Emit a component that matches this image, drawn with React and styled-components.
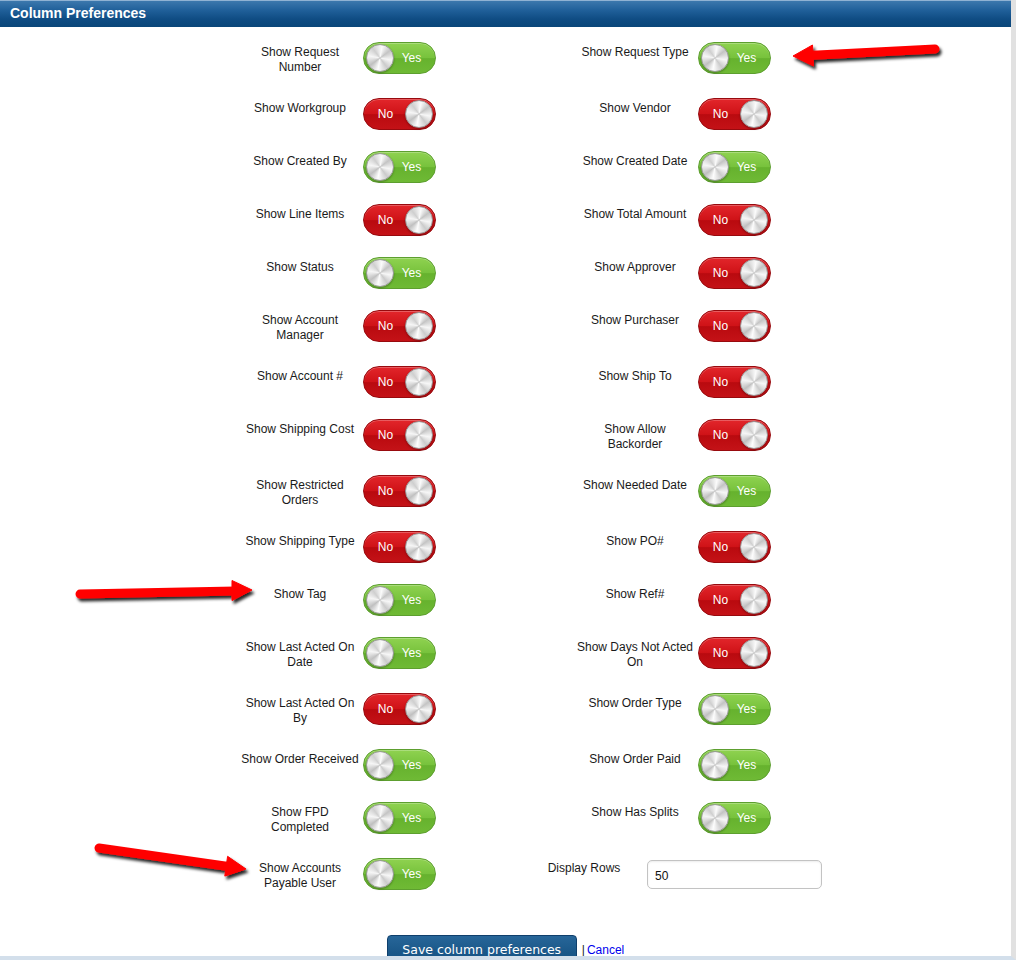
import React, { useState } from 'react';
import styled, { createGlobalStyle } from 'styled-components';

// labels that break where the original page breaks them
const rows = [
  [['Show Request Number', true], ['Show Request Type', true]],
  [['Show Workgroup', false], ['Show Vendor', false]],
  [['Show Created By', true], ['Show Created Date', true]],
  [['Show Line Items', false], ['Show Total Amount', false]],
  [['Show Status', true], ['Show Approver', false]],
  [['Show Account Manager', false], ['Show Purchaser', false]],
  [['Show Account #', false], ['Show Ship To', false]],
  [['Show Shipping Cost', false], ['Show Allow\nBackorder', false]],
  [['Show Restricted Orders', false], ['Show Needed Date', true]],
  [['Show Shipping Type', false], ['Show PO#', false]],
  [['Show Tag', true], ['Show Ref#', false]],
  [['Show Last Acted On Date', true], ['Show Days Not Acted On', false]],
  [['Show Last Acted On By', false], ['Show Order Type', true]],
  [['Show Order Received', true], ['Show Order Paid', true]],
  [['Show FPD\nCompleted', true], ['Show Has Splits', true]],
];

const Toggle = ({ initial }) => {
  const [on, setOn] = useState(initial);
  return (
    <Switch $on={on} onClick={() => setOn(!on)}>
      <Knob />
      <SwitchText $on={on}>{on ? 'Yes' : 'No'}</SwitchText>
    </Switch>
  );
};

const Field = ({ label, value }) => (
  <Cell>
    <Label>{label}</Label>
    <Toggle initial={value} />
  </Cell>
);

const Arrows = () => (
  <Overlay width="1016" height="960" viewBox="0 0 1016 960">
    <defs>
      <filter id="shadow" x="-20%" y="-50%" width="140%" height="200%">
        <feDropShadow dx="2" dy="3" stdDeviation="1.6" floodColor="#000" floodOpacity="0.85" />
      </filter>
    </defs>
    <g filter="url(#shadow)" fill="#ff0000" stroke="#ff0000">
      <line x1="935" y1="49" x2="808" y2="55.5" strokeWidth="9" strokeLinecap="round" />
      <polygon points="793,56 813.5,66 812.5,45" strokeWidth="1" strokeLinejoin="round" />
      <line x1="80" y1="594" x2="236" y2="591" strokeWidth="9" strokeLinecap="round" />
      <polygon points="252,590 232,600.5 232,580.5" strokeWidth="1" strokeLinejoin="round" />
      <line x1="99" y1="848" x2="230" y2="866.7" strokeWidth="9" strokeLinecap="round" />
      <polygon points="246,869 224.8,876.1 227.6,856.3" strokeWidth="1" strokeLinejoin="round" />
    </g>
  </Overlay>
);

export default function App() {
  return (
    <>
      <GlobalStyle />
      <Page>
        <Header>Column Preferences</Header>
        <Grid>
          {rows.map((pair, i) => (
            <React.Fragment key={i}>
              <Field label={pair[0][0]} value={pair[0][1]} />
              <Field label={pair[1][0]} value={pair[1][1]} />
            </React.Fragment>
          ))}
          <Field label="Show Accounts Payable User" value={true} />
          <Cell>
            <Label>Display Rows</Label>
            <RowsInput defaultValue="50" />
          </Cell>
        </Grid>
        <Actions>
          <SaveButton>Save column preferences</SaveButton>
          <Sep>|</Sep>
          <CancelLink href="#">Cancel</CancelLink>
        </Actions>
        <Arrows />
      </Page>
    </>
  );
}

const GlobalStyle = createGlobalStyle`
  html, body {
    margin: 0;
    background: #fff;
    font-family: "Liberation Sans", Arial, sans-serif;
    overflow: hidden;
  }
`;

const Page = styled.div`
  position: relative;
  width: 1011px;
  height: 956px;
  overflow: hidden;
  border-right: 5px solid #e1e1e1;
  border-bottom: 4px solid #d3dfeb;
  background: #fff;
`;

const Header = styled.div`
  height: 27px;
  box-sizing: border-box;
  padding: 4px 0 0 10px;
  background: linear-gradient(#3c78ad 0%, #20609a 35%, #0f4c83 70%, #0a4679 100%);
  border-top: 1px solid #8fb2d3;
  color: #fff;
  font-weight: bold;
  font-size: 14px;
  line-height: 16px;
`;

const Grid = styled.div`
  display: grid;
  grid-template-columns: 300px 300px;
  column-gap: 35px;
  justify-content: center;
  margin-top: 5px;
`;

const Cell = styled.div`
  display: flex;
  justify-content: center;
  align-items: flex-start;
  gap: 3px;
  padding: 10px 0 11px;
`;

const Label = styled.div`
  width: 120px;
  padding: 3px 0 2px;
  text-align: center;
  white-space: pre-line;
  font-size: 12px;
  line-height: 15px;
  color: #1a1a1a;
`;

const Switch = styled.div`
  display: flex;
  flex-direction: ${(p) => (p.$on ? 'row' : 'row-reverse')};
  align-items: center;
  box-sizing: border-box;
  width: 73px;
  height: 32px;
  padding: 0 2px;
  border-radius: 16px;
  cursor: pointer;
  border: 1px solid ${(p) => (p.$on ? '#5d9f2f' : '#980a0e')};
  background: ${(p) =>
    p.$on
      ? 'linear-gradient(#8fd250 0%, #77c23c 50%, #66b22e 52%, #6fba35 100%)'
      : 'linear-gradient(#e2262b 0%, #cf1217 50%, #b90a0f 52%, #c41217 100%)'};
  box-shadow: inset 0 1px 0 rgba(255, 255, 255, 0.25);
`;

const Knob = styled.span`
  width: 28px;
  height: 28px;
  flex: none;
  border-radius: 50%;
  box-sizing: border-box;
  border: 1px solid #999;
  background: conic-gradient(
    from 10deg,
    #fbfbfb,
    #c4c4c4 12%,
    #f7f7f7 25%,
    #cbcbcb 37%,
    #fdfdfd 50%,
    #c0c0c0 62%,
    #f6f6f6 75%,
    #cfcfcf 87%,
    #fbfbfb
  );
  box-shadow: 0 1px 2px rgba(0, 0, 0, 0.3);
`;

const SwitchText = styled.span`
  flex: 1;
  text-align: center;
  padding-right: ${(p) => (p.$on ? '4px' : '0')};
  color: #fff;
  font-size: 12px;
  line-height: 14px;
`;

const RowsInput = styled.input`
  width: 175px;
  height: 29px;
  margin-top: 2px;
  box-sizing: border-box;
  padding: 3px 7px 0;
  border: 1px solid #c3c3c3;
  border-radius: 5px;
  font-family: "Liberation Sans", Arial, sans-serif;
  font-size: 12px;
  color: #111;
  outline: none;
  box-shadow: inset 0 1px 2px rgba(0, 0, 0, 0.08);
`;

const Actions = styled.div`
  display: flex;
  justify-content: center;
  align-items: flex-start;
  margin-top: 31px;
`;

const SaveButton = styled.button`
  width: 190px;
  height: 34px;
  padding: 0 0 5px;
  border: 1px solid #0f3f6c;
  border-radius: 4px 4px 0 0;
  background: linear-gradient(#276699, #1b5889 50%, #144e80 100%);
  color: #fff;
  font-family: "DejaVu Sans", Verdana, sans-serif;
  font-size: 12.5px;
  cursor: pointer;
`;

const Sep = styled.span`
  margin: 8px 2px 0 5px;
  font-size: 12px;
  color: #222;
`;

const CancelLink = styled.a`
  margin-top: 8px;
  font-size: 12px;
  color: #0000ee;
  text-decoration: none;
`;

const Overlay = styled.svg`
  position: absolute;
  top: 0;
  left: 0;
  pointer-events: none;
`;
